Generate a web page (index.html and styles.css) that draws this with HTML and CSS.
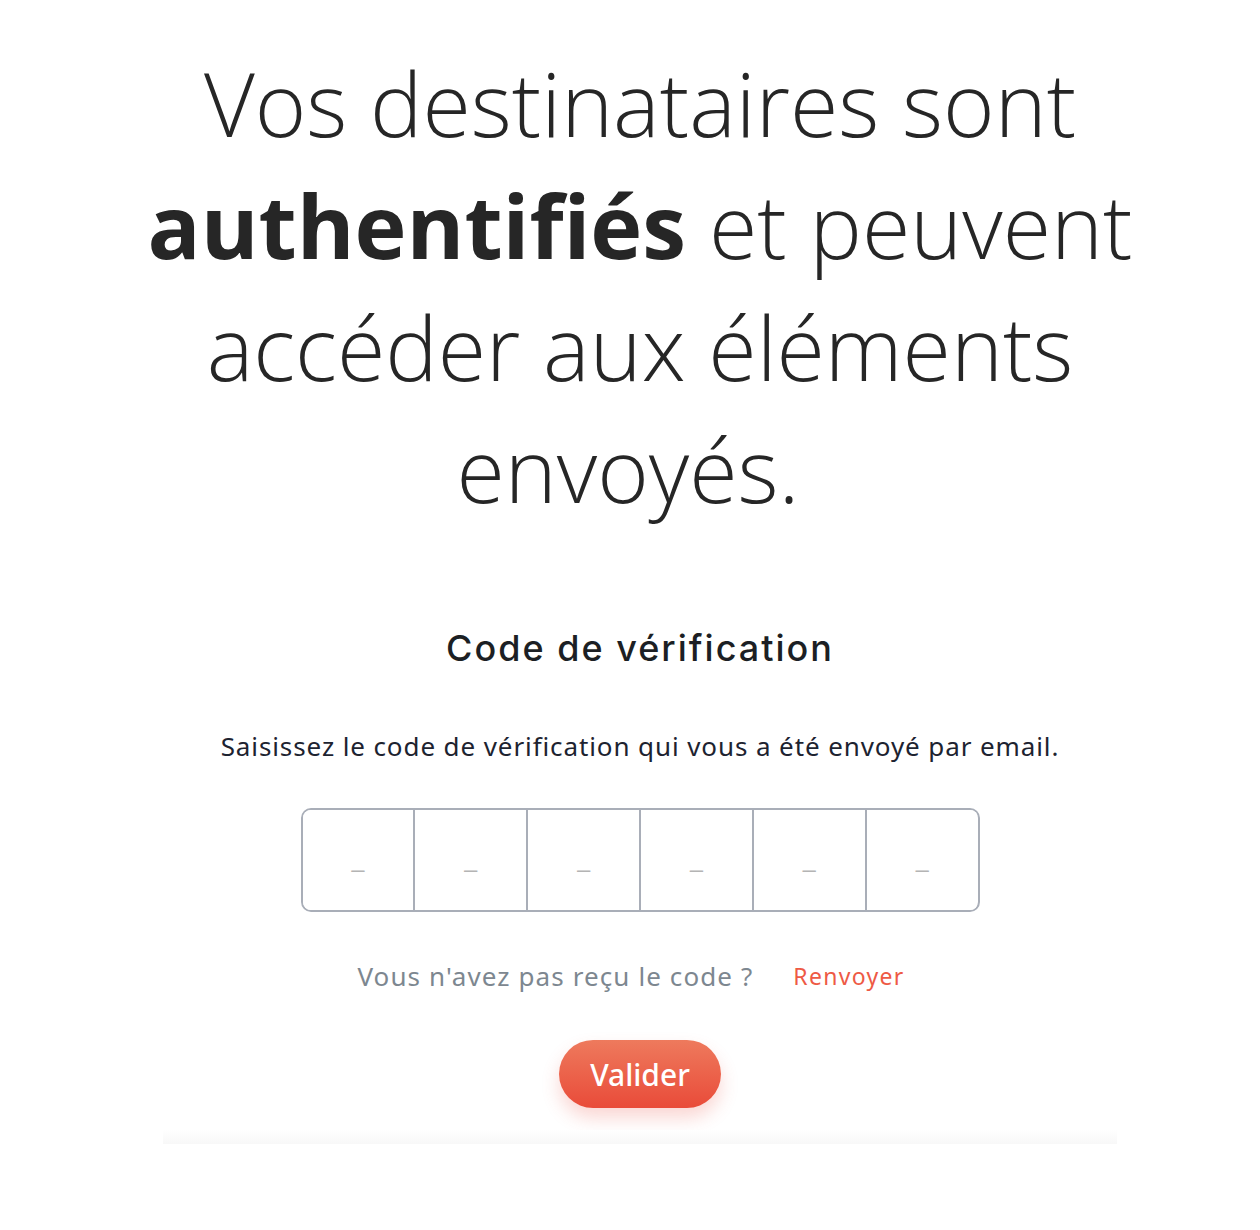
FILE: index.html
```html
<!DOCTYPE html>
<html lang="fr">
<head>
  <meta charset="UTF-8" />
  <title>Code de vérification</title>
  <link rel="stylesheet" href="styles.css">
</head>
<body>

  <div class="hero">
    <h1>Vos destinataires sont <strong>authentifiés</strong> et peuvent accéder aux éléments <span class="tail">envoyés.</span></h1>
  </div>

  <div class="verify">
    <h2>Code de vérification</h2>
    <p class="hint">Saisissez le code de vérification qui vous a été envoyé par email.</p>

    <div class="otp">
      <input type="text" maxlength="1" placeholder="–" />
      <input type="text" maxlength="1" placeholder="–" />
      <input type="text" maxlength="1" placeholder="–" />
      <input type="text" maxlength="1" placeholder="–" />
      <input type="text" maxlength="1" placeholder="–" />
      <input type="text" maxlength="1" placeholder="–" />
    </div>

    <div class="resend">
      <span>Vous n'avez pas reçu le code ?</span>
      <a href="#">Renvoyer</a>
    </div>

    <button class="submit">Valider</button>

    <div class="footer-strip"></div>
  </div>

</body>
</html>
```

FILE: styles.css
```css
body {
  font-family: "Noto Sans", sans-serif;
  background-color: #ffffff;
  margin: 0;
  padding-left: 20px;
  color: #222;
}
.hero {
  max-width: 1010px;
  margin: 0 auto;
  padding-top: 42px;
}
.hero h1 {
  font-family: "Open Sans", sans-serif;
  font-weight: 300;
  font-size: 88px;
  line-height: 122px;
  text-align: center;
  color: #262626;
  margin: 0;
}
.hero h1 strong {
  font-weight: 700;
}
.hero h1 .tail {
  padding-right: 24px;
}
.verify {
  display: flex;
  flex-direction: column;
  align-items: center;
  padding-top: 96px;
}
.verify h2 {
  font-family: "Inter", sans-serif;
  font-weight: 500;
  font-size: 36px;
  letter-spacing: 2px;
  color: #1c1f24;
  margin: 0;
}
.hint {
  font-size: 26px;
  letter-spacing: 0.9px;
  color: #1d2330;
  margin: 58px 0 0;
}
.otp {
  display: flex;
  margin-top: 44px;
  width: 679px;
  height: 104px;
  border: 2px solid #a9aeb8;
  border-radius: 10px;
  box-sizing: border-box;
  overflow: hidden;
}
.otp input {
  flex: 1;
  width: 0;
  border: none;
  border-left: 2px solid #a9aeb8;
  text-align: center;
  font-size: 24px;
  padding-top: 18px;
  outline: none;
  background: white;
}
.otp input:first-child {
  border-left: none;
}
.otp input::placeholder {
  color: #b4b4b4;
}
.resend {
  display: flex;
  gap: 40px;
  align-items: center;
  margin-top: 46px;
  padding-right: 18px;
}
.resend span {
  font-size: 26px;
  letter-spacing: 1.1px;
  color: #7d8790;
}
.resend a {
  font-size: 23px;
  letter-spacing: 1.3px;
  color: #ee5a45;
  text-decoration: none;
}
.submit {
  margin-top: 46px;
  width: 162px;
  height: 68px;
  border: none;
  border-radius: 34px;
  background: linear-gradient(to bottom, #ee7a5d, #e94b39);
  color: white;
  font-family: "Noto Sans", sans-serif;
  font-size: 30px;
  font-weight: 500;
  box-shadow: 0 10px 18px rgba(233, 75, 57, 0.22);
  cursor: pointer;
}
.footer-strip {
  width: 954px;
  height: 14px;
  margin-top: 22px;
  background: linear-gradient(to bottom, #ffffff, #f8f8f8);
}
```
